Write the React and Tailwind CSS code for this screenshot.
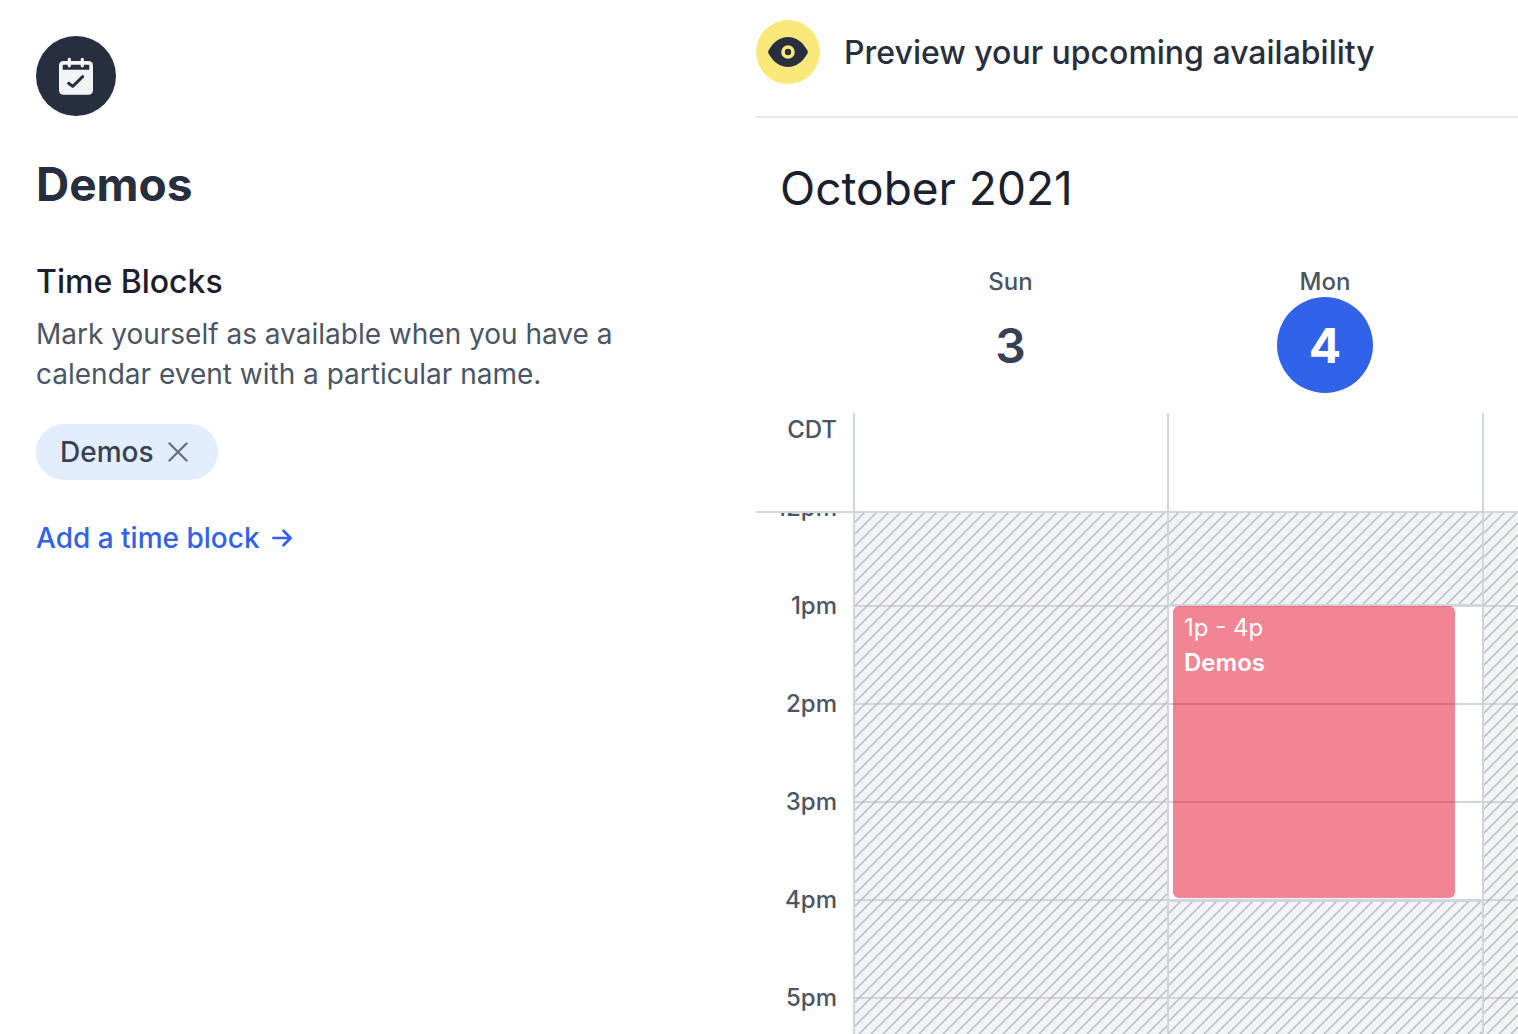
import React, { useState } from 'react';

const days = [
  { name: 'Sun', date: 3, today: false },
  { name: 'Mon', date: 4, today: true },
];

const hours = ['12pm', '1pm', '2pm', '3pm', '4pm', '5pm'];

const columns = 'grid grid-cols-[97px_314fr_315fr_36fr]';

const hatch =
  'absolute bg-[linear-gradient(135deg,#b4b8c6_0%,#b4b8c6_2%,transparent_6%,transparent_44%,#b4b8c6_48%,#b4b8c6_52%,transparent_56%,transparent_94%,#b4b8c6_98%,#b4b8c6_100%)] bg-size-[12px_12px]';

const CalendarIcon = () => (
  <svg viewBox="0 0 40 40" className="w-10 h-10" fill="none" aria-hidden="true">
    <rect x="3" y="5" width="34" height="33.700" rx="4.500" fill="#f3f4f6" />
    <path d="M7.700 8.700h24.600q1 0 1 1v4H6.700v-4q0-1 1-1z" fill="#272f3f" />
    <path d="M13.300 3.300v6.500M26.300 3.300v6.500" stroke="#f3f4f6" strokeWidth="3.200" strokeLinecap="round" />
    <path d="M12.600 27.300l4.100 3 10-9.600" stroke="#272f3f" strokeWidth="3" strokeLinecap="round" strokeLinejoin="round" />
  </svg>
);

const EyeIcon = () => (
  <svg viewBox="0 0 40 30" className="w-10" fill="none" aria-hidden="true">
    <path d="M20 0C12 0 5.500 5 .8 13q-1.200 2 0 4C5.500 25 12 30 20 30s14.500-5 19.200-13q1.200-2 0-4C34.500 5 28 0 20 0z" fill="#272f3f" />
    <circle cx="20" cy="15" r="5" stroke="#fae97a" strokeWidth="3.600" />
  </svg>
);

const HourRows = ({ available = [] }) => (
  <>
    {hours.map((hour) => (
      <div
        key={hour}
        className={`h-[98px] border-t-2 border-gray-300 ${available.includes(hour) ? 'bg-white' : 'bg-[#f1f3f4]'}`}
      />
    ))}
  </>
);

const TimeBlocks = () => {
  const [blocks, setBlocks] = useState(['Demos']);

  const removeBlock = (name) => {
    setBlocks(blocks.filter((block) => block !== name));
  };

  return (
    <section className="p-9 text-[28px] leading-10">
      <div className="flex items-center justify-center w-20 h-20 rounded-full bg-[#272f3f]">
        <CalendarIcon />
      </div>
      <h1 className="mt-11 text-[46px] leading-12 font-bold text-[#272f3f]">Demos</h1>
      <h2 className="mt-[54px] text-[32px] leading-10 font-medium text-[#1a202e]">Time Blocks</h2>
      <p className="mt-3 max-w-[600px] text-gray-600">
        Mark yourself as available when you have a calendar event with a particular name.
      </p>

      <div className="flex gap-3 mt-[30px] h-14">
        {blocks.map((block) => (
          <span key={block} className="flex items-center gap-3.5 pl-6 pr-[30px] rounded-full bg-[#e2eefd] font-medium text-gray-700">
            {block}
            <button type="button" aria-label={`Remove ${block}`} onClick={() => removeBlock(block)} className="cursor-pointer">
              <svg viewBox="0 0 20 20" className="w-5 h-5" fill="none" stroke="#6b7280" strokeWidth="2.400" strokeLinecap="round">
                <path d="M1.500 1.500l17 17M18.500 1.500l-17 17" />
              </svg>
            </button>
          </span>
        ))}
      </div>

      <a href="#add" className="inline-flex items-center gap-3 mt-[38px] font-medium text-[#3162ea]">
        Add a time block
        <svg viewBox="0 0 20 18" className="w-5" fill="none" stroke="currentColor" strokeWidth="2.700" strokeLinecap="round" strokeLinejoin="round" aria-hidden="true">
          <path d="M1.400 9h17M11.500 1.800L18.600 9l-7.100 7.200" />
        </svg>
      </a>
    </section>
  );
};

const Calendar = () => (
  <section className="flex flex-col min-h-0 text-2xl font-medium text-gray-600">
    <header className="flex items-center gap-6 pt-5 pb-8 border-b-2 border-gray-200">
      <div className="flex items-center justify-center w-16 h-16 rounded-full bg-[#fae97a]">
        <EyeIcon />
      </div>
      <h2 className="pt-0.5 text-[32px] leading-10 text-[#272f3f]">Preview your upcoming availability</h2>
    </header>

    <h3 className="pl-6 mt-[46px] text-[46px] leading-12 font-normal text-[#1a202e]">October 2021</h3>

    <div className={`${columns} mt-[55px]`}>
      <div />
      {days.map((day) => (
        <div key={day.name} className="flex flex-col items-center pl-px">
          <span className="leading-[30px]">{day.name}</span>
          <span
            className={`flex items-center justify-center w-24 h-24 pt-0.5 rounded-full text-5xl ${
              day.today ? 'bg-[#3162ea] text-white font-bold' : 'text-gray-700 font-semibold'
            }`}
          >
            {day.date}
          </span>
        </div>
      ))}
    </div>

    <div className={`${columns} mt-5 h-[100px] shrink-0 border-b-2 border-gray-300`}>
      <div className="pt-px pr-4 text-right leading-8">CDT</div>
      <div className="border-l-2 border-gray-300" />
      <div className="border-l-2 border-gray-300" />
      <div className="border-l-2 border-gray-300" />
    </div>

    {/* grid is scrolled slightly past noon */}
    <div className="flex-1 min-h-0 overflow-hidden">
      <div className={`${columns} -mt-1.5`}>
        <div className="-mt-[15px] pr-4 text-right">
          {hours.map((hour) => (
            <div key={hour} className="h-[98px] leading-8">{hour}</div>
          ))}
        </div>

        <div className="relative border-l-2 border-gray-300">
          <HourRows />
          <div className={`${hatch} inset-0 bg-position-[3px_0px]`} />
        </div>

        <div className="relative border-l-2 border-gray-300">
          <HourRows available={['1pm', '2pm', '3pm']} />
          <div className={`${hatch} inset-x-0 top-0 h-[97px] bg-position-[3px_0px]`} />
          <div className="absolute inset-x-0 top-[97px] h-[3px] bg-gray-300" />
          <div className="absolute inset-x-0 top-[392px] h-[3px] bg-gray-300" />
          <div className={`${hatch} inset-x-0 top-[395px] bottom-0 bg-position-[-1px_0px]`} />
          <div className="absolute left-1 right-[27px] top-[99px] h-[292px] px-[11px] py-1.5 rounded-md bg-[#e50b27]/50 text-white">
            <p className="leading-8 font-normal">1p - 4p</p>
            <p className="mt-[3px] leading-8 font-semibold">Demos</p>
          </div>
        </div>

        <div className="relative border-l-2 border-gray-300">
          <HourRows />
          <div className={`${hatch} inset-0 bg-position-[2px_0px]`} />
        </div>
      </div>
    </div>
  </section>
);

const App = () => {
  return (
    <main className="grid grid-cols-[756fr_762fr] h-screen overflow-hidden bg-white font-['Inter',sans-serif]">
      <TimeBlocks />
      <Calendar />
    </main>
  );
};

export default App;
